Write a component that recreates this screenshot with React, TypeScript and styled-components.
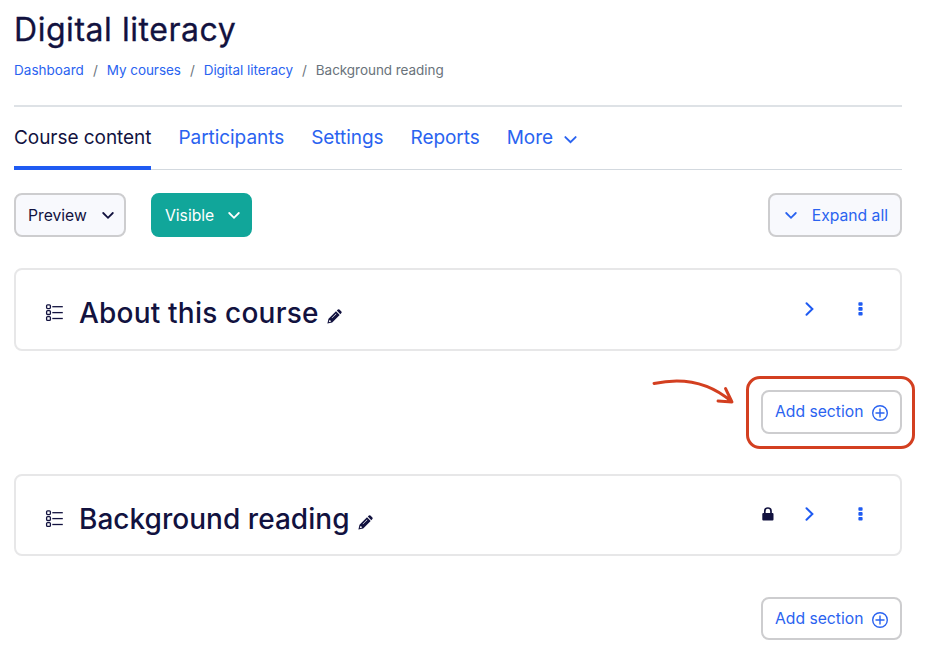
import React from "react";
import styled, { createGlobalStyle } from "styled-components";

const navy = "#12123f";
const blue = "#1f5bf2";
const linkBlue = "#2a63f0";

const GlobalStyle = createGlobalStyle`
  *, *::before, *::after { box-sizing: border-box; }
  body {
    margin: 0;
    background: #fff;
    color: ${navy};
    font-family: Inter, "Liberation Sans", sans-serif;
    overflow: hidden;
  }
  button { font-family: inherit; cursor: pointer; }
  a { text-decoration: none; }
  svg { display: block; flex: none; overflow: visible; }
`;

const Page = styled.main`
  width: 888px;
  margin-left: 14px;
  height: 657px;
  display: flex;
  flex-direction: column;
`;

const PageTitle = styled.h1`
  margin: 9px 0 0 0;
  font-size: 32px;
  line-height: 41px;
  height: 40px;
  font-weight: 400;
  -webkit-text-stroke: 0.3px ${navy};
  letter-spacing: 0.55px;
`;

const Breadcrumb = styled.nav`
  display: flex;
  gap: 9px;
  height: 56px;
  padding-top: 11px;
  font-size: 13.5px;
  letter-spacing: -0.05px;
  line-height: 20px;
  color: #6a737b;
  white-space: nowrap;
`;

const Crumb = styled.a`
  color: ${linkBlue};
  &:first-child { letter-spacing: 0.03px; }
`;

const Tabs = styled.nav`
  display: flex;
  gap: 27px;
  height: 65px;
  border-top: 2px solid #dee2e6;
  border-bottom: 1px solid #d3d9df;
`;

const Tab = styled.a<{ $active?: boolean }>`
  display: flex;
  align-items: flex-start;
  gap: 11px;
  height: 63px;
  padding-top: 19px;
  font-size: 19px;
  letter-spacing: -0.05px;
  line-height: 24px;
  font-weight: 400;
  white-space: nowrap;
  color: ${(p) => (p.$active ? navy : linkBlue)};
  border-bottom: 4px solid ${(p) => (p.$active ? blue : "transparent")};
  svg { margin-top: 10px; }
`;

const Toolbar = styled.div`
  display: flex;
  gap: 25px;
  margin: 23px 0 31px;
  height: 44px;
`;

type Variant = "plain" | "tinted" | "solid";

const Button = styled.button<{ $variant: Variant; $width: number; $ink?: string }>`
  display: flex;
  align-items: center;
  justify-content: space-between;
  width: ${(p) => p.$width}px;
  height: 100%;
  padding: 1px 12px 0;
  font-size: 15.7px;
  line-height: 20px;
  white-space: nowrap;
  border-radius: 8px;
  border: 2px solid ${(p) => (p.$variant === "solid" ? "#11a69a" : "#cdcdcf")};
  background: ${(p) => ({ plain: "#fff", tinted: "#f8f9fd", solid: "#11a69a" })[p.$variant]};
  color: ${(p) => p.$ink ?? linkBlue};
`;

const MenuButton = styled(Button)`
  padding-right: 10px;
`;

const ExpandButton = styled(Button)`
  margin-left: auto;
  padding-left: 15px;
`;

const Card = styled.section<{ $height: number }>`
  display: flex;
  height: ${(p) => p.$height}px;
  padding: 0 37px 0 30px;
  border: 2px solid #e7e7e8;
  border-radius: 8px;
`;

const SectionTitle = styled.h2<{ $tracking: number }>`
  display: flex;
  align-items: center;
  height: 36px;
  margin: 25px 0 0 15px;
  font-size: 28px;
  font-weight: 500;
  letter-spacing: ${(p) => p.$tracking}px;
  white-space: nowrap;
`;

const ListGlyph = styled.div`
  margin-top: 34px;
`;

const EditGlyph = styled.div`
  margin: 39px 0 0 8px;
`;

const Actions = styled.div<{ $top: number }>`
  display: flex;
  align-items: center;
  height: 16px;
  margin: ${(p) => p.$top}px 0 0 auto;
`;

const Action = styled.span<{ $after?: number }>`
  display: flex;
  margin-right: ${(p) => p.$after ?? 0}px;
`;

const AddRow = styled.div<{ $height: number; $before: number; $after?: number }>`
  display: flex;
  justify-content: flex-end;
  height: ${(p) => p.$height}px;
  margin: ${(p) => `${p.$before}px 0 ${p.$after ?? 0}px`};
`;

const AddWrap = styled.div`
  position: relative;
`;

const AddButton = styled(Button)`
  padding-top: 0;
  svg { margin-top: 2px; }
`;

const Callout = styled.div`
  position: absolute;
  inset: -14px -13px -15px -15px;
  border: 3px solid #d33f20;
  border-radius: 14px;
  pointer-events: none;
`;

const ArrowOverlay = styled.svg`
  position: absolute;
  left: -109px;
  top: -13px;
  pointer-events: none;
`;

const ChevronDown = ({ size = 12 }: { size?: number }) => (
  <svg width={size} height={size / 2 + 1} viewBox="0 0 12 7" fill="none" stroke="currentColor" strokeWidth="1.8">
    <path d="M1.2 1l4.8 4.8L10.8 1" strokeLinecap="round" />
  </svg>
);

const ChevronRight = () => (
  <svg width="9" height="14" viewBox="0 0 9 14" fill="none" stroke={blue} strokeWidth="2">
    <path d="M1.5 1.2l5.9 5.8-5.9 5.8" strokeLinecap="round" />
  </svg>
);

const Dots = () => (
  <svg width="5" height="14" viewBox="0 0 5 14" fill={blue}>
    <rect x="0.4" y="0.2" width="4.2" height="3.6" rx="0.8" />
    <rect x="0.4" y="5.1" width="4.2" height="3.6" rx="0.8" />
    <rect x="0.4" y="10" width="4.2" height="3.6" rx="0.8" />
  </svg>
);

const ListIcon = () => (
  <svg width="18" height="18" viewBox="0 0 18 18" fill="none" stroke={navy} strokeWidth="1.3">
    {[0.8, 6.7, 12.6].map((y) => (
      <g key={y}>
        <rect x="0.6" y={y} width="3.8" height="3.8" rx="1" />
        <path d={`M6.3 ${y + 1.9}H16.8`} />
      </g>
    ))}
  </svg>
);

const Pencil = () => (
  <svg width="15" height="15" viewBox="0 0 15 15" fill={navy}>
    <path d="M9.8 1.6 10.9.6q.8-.7 1.5 0l2 2q.7.7 0 1.5l-1.1 1.1z" />
    <path fillRule="evenodd" d="M9 2.3 12.7 6 5.2 13.5.4 14.6l1.1-4.8zM9 4.5 4.6 8.9l.4.4 4.4-4.4zM2.4 11l-.6 2.2 2.2-.6v-.9l-.9-.1z" />
  </svg>
);

const Lock = () => (
  <svg width="12" height="14" viewBox="0 0 12 14">
    <path d="M2.8 7V4.1a3.1 3.1 0 0 1 6.2 0V7" fill="none" stroke={navy} strokeWidth="1.7" />
    <rect x="0.3" y="6" width="11.2" height="7.4" rx="1" fill={navy} />
  </svg>
);

const PlusCircle = () => (
  <svg width="16" height="16" viewBox="0 0 16 16" fill="none" stroke="currentColor" strokeWidth="1.4">
    <circle cx="8" cy="8" r="7.3" />
    <path d="M8 3.5v9M3.5 8h9" />
  </svg>
);

type SectionProps = {
  title: string;
  height: number;
  tracking: number;
  actionsTop: number;
  locked?: boolean;
};

const SectionCard = ({ title, height, tracking, actionsTop, locked }: SectionProps) => (
  <Card $height={height}>
    <ListGlyph><ListIcon /></ListGlyph>
    <SectionTitle $tracking={tracking}>{title}</SectionTitle>
    <EditGlyph><Pencil /></EditGlyph>
    <Actions $top={actionsTop}>
      {locked && <Action $after={31}><Lock /></Action>}
      <Action $after={44}><ChevronRight /></Action>
      <Action><Dots /></Action>
    </Actions>
  </Card>
);

const AddSection = () => (
  <AddButton $variant="plain" $width={141}>
    <span>Add section</span>
    <PlusCircle />
  </AddButton>
);

const crumbs = ["Dashboard", "My courses", "Digital literacy"];

export default function App() {
  return (
    <>
      <GlobalStyle />
      <Page>
        <PageTitle>Digital literacy</PageTitle>
        <Breadcrumb>
          {crumbs.map((c) => (
            <React.Fragment key={c}>
              <Crumb>{c}</Crumb>
              <span>/</span>
            </React.Fragment>
          ))}
          <span>Background reading</span>
        </Breadcrumb>
        <Tabs>
          <Tab $active>Course content</Tab>
          <Tab>Participants</Tab>
          <Tab>Settings</Tab>
          <Tab>Reports</Tab>
          <Tab>More <ChevronDown size={13} /></Tab>
        </Tabs>
        <Toolbar>
          <MenuButton $variant="tinted" $width={112} $ink={navy}>Preview <ChevronDown /></MenuButton>
          <MenuButton $variant="solid" $width={101} $ink="#fff">Visible <ChevronDown /></MenuButton>
          <ExpandButton $variant="tinted" $width={134}><ChevronDown /> Expand all</ExpandButton>
        </Toolbar>
        <SectionCard title="About this course" height={83} tracking={0.2} actionsTop={31} />
        <AddRow $before={39} $height={44} $after={40}>
          <AddWrap>
            <AddSection />
            <Callout />
            <ArrowOverlay width="82" height="32" viewBox="0 0 82 32" fill="none" stroke="#d33f20" strokeWidth="2.9" strokeLinecap="round" strokeLinejoin="round">
              <path d="M2 6.5C32 0 58 6 79.5 24.5M73.5 11.5 80 25 66 24" />
            </ArrowOverlay>
          </AddWrap>
        </AddRow>
        <SectionCard title="Background reading" height={82} tracking={0.03} actionsTop={30} locked />
        <AddRow $before={41} $height={43}>
          <AddSection />
        </AddRow>
      </Page>
    </>
  );
}
